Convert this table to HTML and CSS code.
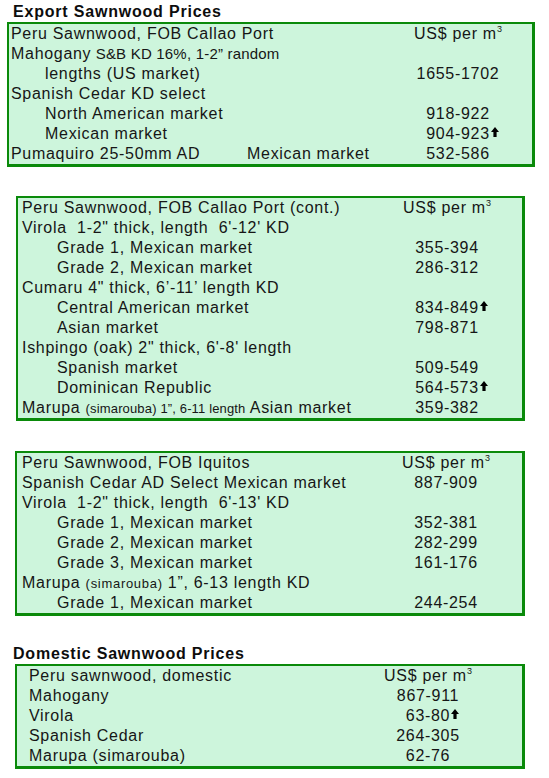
FILE: index.html
```html
<!DOCTYPE html>
<html>
<head>
<meta charset="utf-8">
<link rel="stylesheet" href="styles.css">
</head>
<body>
<div class="page">
  <div class="title t1">Export Sawnwood Prices</div>
  <div class="box b1">
    <div class="row"><span class="lbl">Peru Sawnwood, FOB Callao Port</span><span class="val">US$ per m<sup>3</sup></span></div>
    <div class="row"><span class="lbl">Mahogany<span class="narrow"> S&amp;B KD 16%, 1-2” random</span></span><span class="val"></span></div>
    <div class="row"><span class="lbl in">lengths (US market)</span><span class="val">1655-1702</span></div>
    <div class="row"><span class="lbl">Spanish Cedar KD select</span><span class="val"></span></div>
    <div class="row"><span class="lbl in">North American market</span><span class="val">918-922</span></div>
    <div class="row"><span class="lbl in">Mexican market</span><span class="val"><span class="num">904-923<svg class="up" viewBox="0 0 8 10"><polygon points="4,0 8,5 5.6,5 5.6,10 2.4,10 2.4,5 0,5"/></svg></span></span></div>
    <div class="row"><span class="lbl"><span class="fix">Pumaquiro 25-50mm AD</span>Mexican market</span><span class="val">532-586</span></div>
  </div>

  <div class="box b2">
    <div class="row"><span class="lbl">Peru Sawnwood, FOB Callao Port (cont.)</span><span class="val">US$ per m<sup>3</sup></span></div>
    <div class="row"><span class="lbl">Virola&nbsp; 1-2" thick, length&nbsp; 6'-12' KD</span><span class="val"></span></div>
    <div class="row"><span class="lbl in">Grade 1, Mexican market</span><span class="val">355-394</span></div>
    <div class="row"><span class="lbl in">Grade 2, Mexican market</span><span class="val">286-312</span></div>
    <div class="row"><span class="lbl">Cumaru 4" thick, 6’-11’ length KD</span><span class="val"></span></div>
    <div class="row"><span class="lbl in">Central American market</span><span class="val"><span class="num">834-849<svg class="up" viewBox="0 0 8 10"><polygon points="4,0 8,5 5.6,5 5.6,10 2.4,10 2.4,5 0,5"/></svg></span></span></div>
    <div class="row"><span class="lbl in">Asian market</span><span class="val">798-871</span></div>
    <div class="row"><span class="lbl">Ishpingo (oak) 2" thick, 6'-8' length</span><span class="val"></span></div>
    <div class="row"><span class="lbl in">Spanish market</span><span class="val">509-549</span></div>
    <div class="row"><span class="lbl in">Dominican Republic</span><span class="val"><span class="num">564-573<svg class="up" viewBox="0 0 8 10"><polygon points="4,0 8,5 5.6,5 5.6,10 2.4,10 2.4,5 0,5"/></svg></span></span></div>
    <div class="row"><span class="lbl">Marupa <span class="small tight">(simarouba) 1”, 6-11 length</span> Asian market</span><span class="val">359-382</span></div>
  </div>

  <div class="box b3">
    <div class="row"><span class="lbl">Peru Sawnwood, FOB Iquitos</span><span class="val">US$ per m<sup>3</sup></span></div>
    <div class="row"><span class="lbl">Spanish Cedar AD Select Mexican market</span><span class="val">887-909</span></div>
    <div class="row"><span class="lbl">Virola&nbsp; 1-2" thick, length&nbsp; 6'-13' KD</span><span class="val"></span></div>
    <div class="row"><span class="lbl in">Grade 1, Mexican market</span><span class="val">352-381</span></div>
    <div class="row"><span class="lbl in">Grade 2, Mexican market</span><span class="val">282-299</span></div>
    <div class="row"><span class="lbl in">Grade 3, Mexican market</span><span class="val">161-176</span></div>
    <div class="row"><span class="lbl">Marupa <span class="small">(simarouba)</span> 1”, 6-13 length KD</span><span class="val"></span></div>
    <div class="row"><span class="lbl in">Grade 1, Mexican market</span><span class="val">244-254</span></div>
  </div>

  <div class="title t2">Domestic Sawnwood Prices</div>
  <div class="box b4">
    <div class="row"><span class="lbl">Peru sawnwood, domestic</span><span class="val">US$ per m<sup>3</sup></span></div>
    <div class="row"><span class="lbl">Mahogany</span><span class="val">867-911</span></div>
    <div class="row"><span class="lbl">Virola</span><span class="val"><span class="num">63-80<svg class="up" viewBox="0 0 8 10"><polygon points="4,0 8,5 5.6,5 5.6,10 2.4,10 2.4,5 0,5"/></svg></span></span></div>
    <div class="row"><span class="lbl">Spanish Cedar</span><span class="val">264-305</span></div>
    <div class="row"><span class="lbl">Marupa (simarouba)</span><span class="val">62-76</span></div>
  </div>
</div>
</body>
</html>
```

FILE: styles.css
```css
html, body {
  margin: 0;
  padding: 0;
  background: #ffffff;
}

.page {
  width: 549px;
  height: 778px;
  font-family: "Liberation Sans", Arial, sans-serif;
  font-size: 16px;
  letter-spacing: 0.7px;
  color: #161616;
  display: flex;
  flex-direction: column;
}

.title {
  font-weight: bold;
  line-height: 20px;
  height: 20px;
  padding-left: 13px;
  color: #0d0d0d;
  letter-spacing: 0.8px;
}

.t1 { margin-top: 2px; }
.t2 { margin-top: 28px; }

.box {
  background: #cdf5dc;
  border-style: solid;
  border-color: #0a8a0a;
  border-width: 2px 3px 3px 2px;
  display: flex;
  flex-direction: column;
}

.b1 { margin: 0 14px 0 7px; padding: 0 19px 0 2px; }
.b2 { margin: 29px 24px 0 16px; padding: 0 20px 0 4px; }
.b3 { margin: 30px 24px 0 15px; padding: 0 21px 0 5px; }
.b4 { margin: 0 24px 0 15px; padding: 0 39px 0 12px; }

.row {
  display: grid;
  grid-template-columns: 1fr 110px;
  height: 20px;
  line-height: 20px;
  white-space: nowrap;
}

.lbl { overflow: visible; }
.in { padding-left: 34px; }
.b2 .in, .b3 .in { padding-left: 35px; }

.val {
  text-align: center;
}

.num {
  position: relative;
}

.up {
  position: absolute;
  left: 100%;
  top: 2px;
  width: 8px;
  height: 10px;
  margin-left: 1px;
  fill: #000;
}

sup {
  font-size: 9px;
  line-height: 0;
  vertical-align: 7px;
  letter-spacing: 0;
}

.narrow {
  font-size: 15px;
  letter-spacing: 0.2px;
}

.small {
  font-size: 13px;
}

.small.tight {
  letter-spacing: 0.15px;
}

.fix {
  display: inline-block;
  width: 236px;
}
```
